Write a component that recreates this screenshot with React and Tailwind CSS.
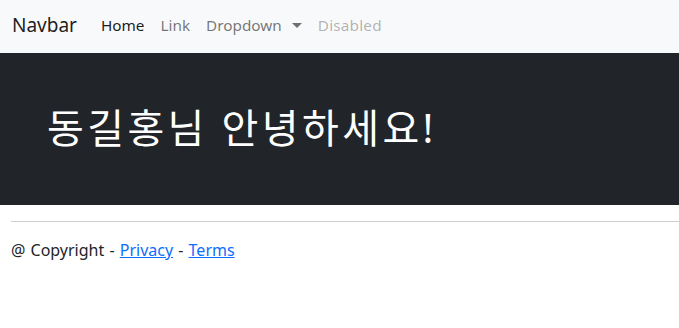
import React from 'react';

const FONT = '"Noto Sans", "Noto Sans CJK KR", sans-serif';

export default function App() {
  return (
    <div className="min-h-[328px] bg-white text-[#212529]" style={{ fontFamily: FONT }}>
      {/* Navbar */}
      <nav className="h-[53px] bg-[#f8f9fa] flex items-center pl-[12px] pb-[2px]">
        <span className="text-[19px] leading-none text-black/90 mr-[24px]">Navbar</span>
        <ul className="flex items-center text-[15.3px] leading-none">
          <li className="pr-[8px] text-black/90">Home</li>
          <li className="px-[8px] text-black/55">Link</li>
          <li className="px-[8px] text-black/55 flex items-center">
            Dropdown
            <span className="ml-[10px] inline-block w-0 h-0 border-l-[5px] border-r-[5px] border-t-[5px] border-l-transparent border-r-transparent border-t-black/55" />
          </li>
          <li className="pl-[8px] tracking-[0.2px] text-black/30">Disabled</li>
        </ul>
      </nav>

      {/* Hero */}
      <section className="h-[152px] bg-[#212529] flex items-center pl-[47px]">
        <h1 className="text-[40px] tracking-[3.4px] leading-none text-white pb-[3px]">동길홍님 안녕하세요!</h1>
      </section>

      {/* Footer */}
      <footer className="pl-[11px] pt-[16px]">
        <hr className="border-0 border-t border-[#cfcfcf]" />
        <p className="mt-[16px] text-[16px] leading-[24px] [word-spacing:1px]">
          @ Copyright - <a href="#" className="text-[#0d6efd] underline">Privacy</a> - <a href="#" className="text-[#0d6efd] underline">Terms</a>
        </p>
      </footer>
    </div>
  );
}
